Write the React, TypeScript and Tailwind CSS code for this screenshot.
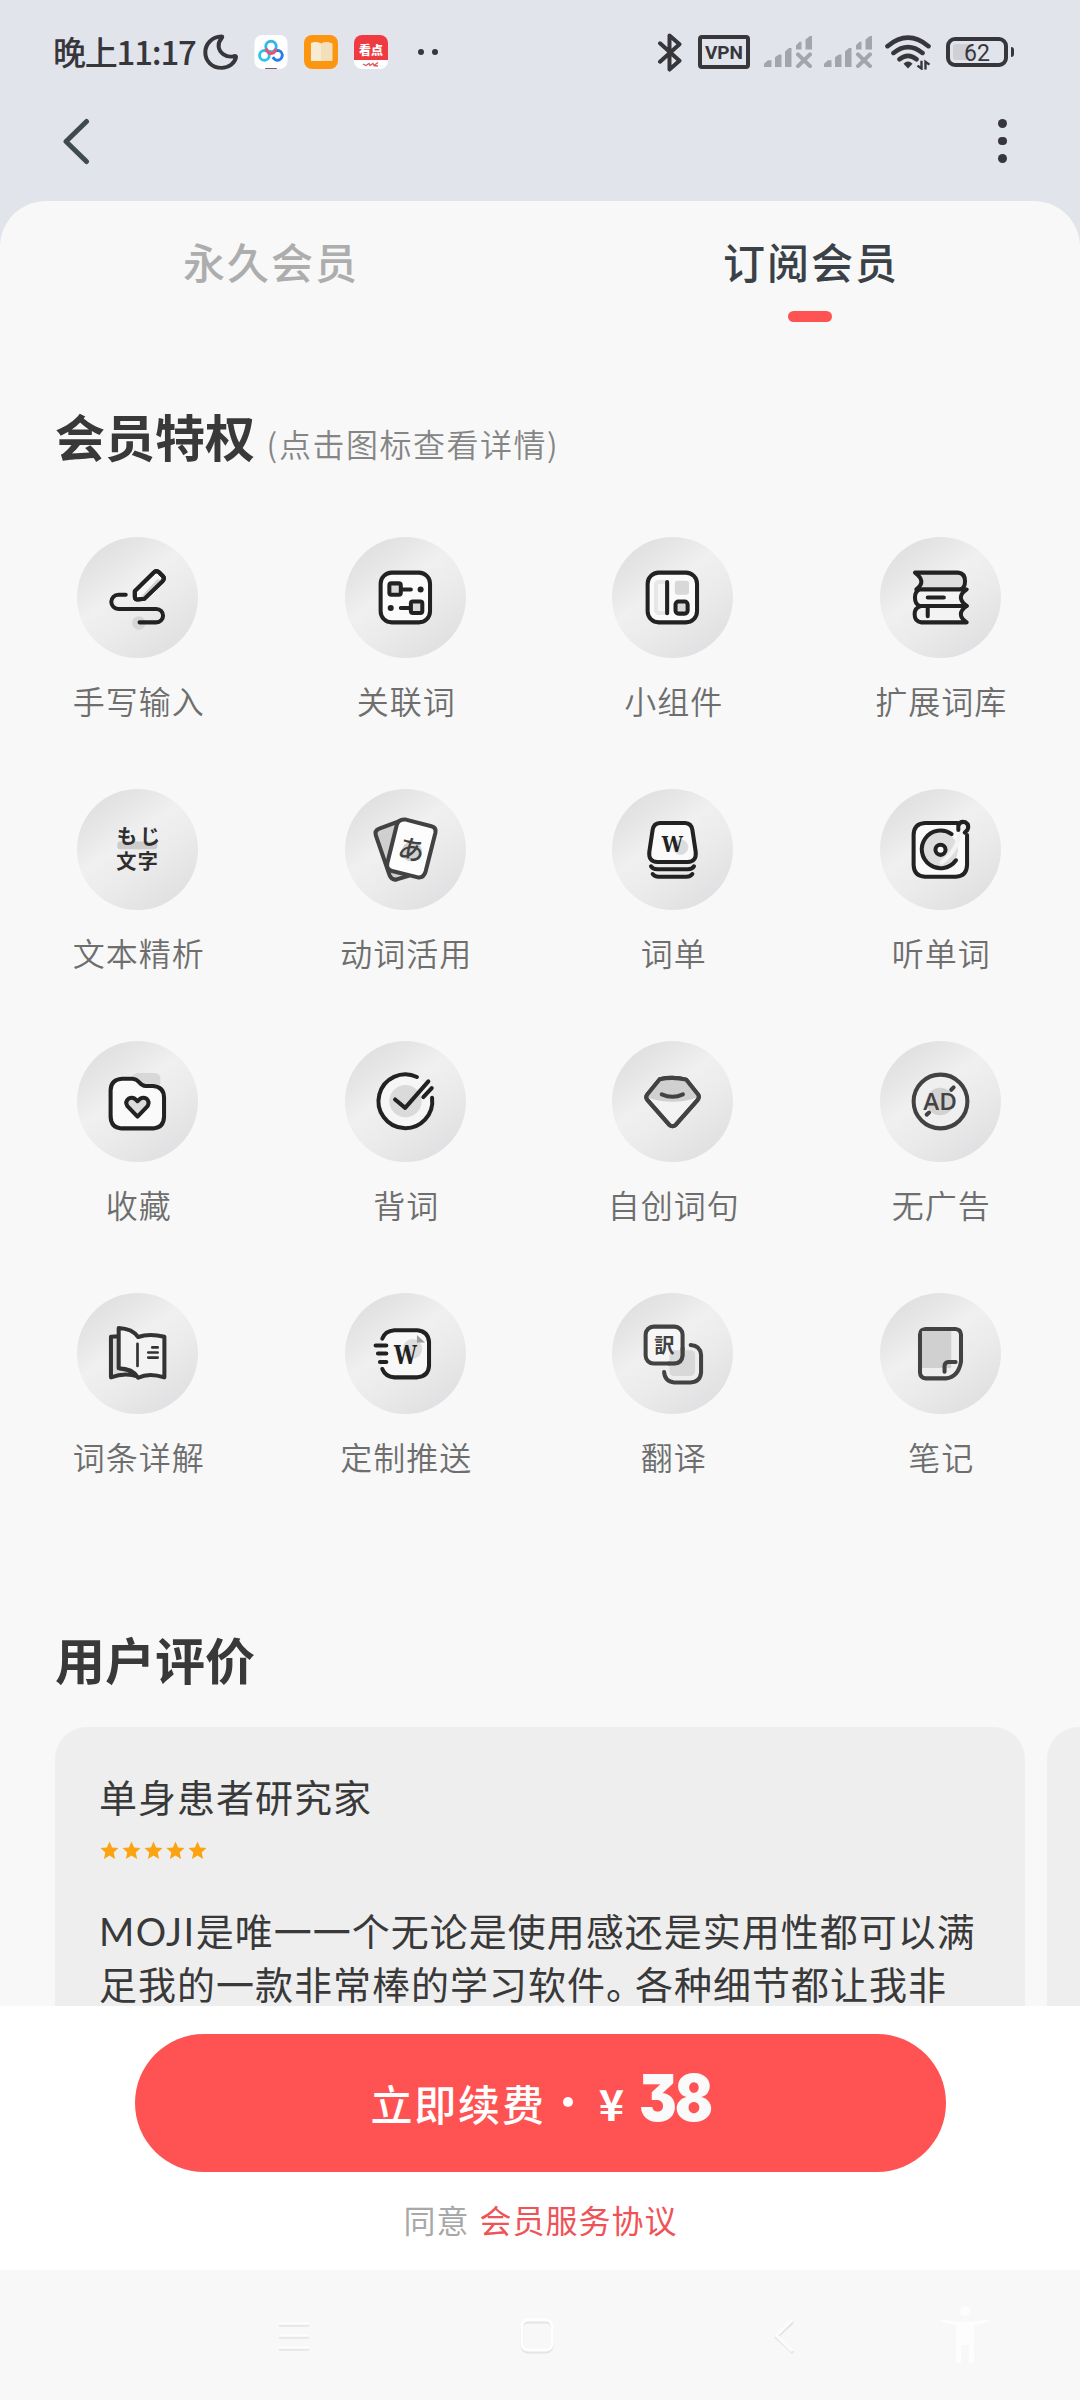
import type { ReactNode } from "react";

const INK = "#222222";
const SOFT_INK = "#424242";

/* Status bar icons */

function Moon() {
  return (
    <svg className="h-[36px] w-[36px]" viewBox="0 0 36 38" preserveAspectRatio="none" fill="none">
      <path
        d="M18.500 2.500C9 3 2.300 10.500 2.300 19.500C2.300 29 9.500 35.700 18.500 35.700C26 35.700 31.800 31 33 24.500C33.200 23.200 32.300 22.800 31.300 23.200C28 24.500 24 24 20.500 21.500C14.500 17 14.200 10 18.500 4.500C19.400 3.300 19.500 2.500 18.500 2.500Z"
        stroke="#37363b"
        strokeWidth="4"
        strokeLinejoin="round"
      />
    </svg>
  );
}

function CloudDiskIcon() {
  return (
    <svg className="h-[34px] w-[34px]" viewBox="0 0 34 35" fill="none">
      <rect width="34" height="35" rx="8" fill="#ffffff" />
      <circle cx="10.200" cy="21" r="5" stroke="#2fc3e6" strokeWidth="3" />
      <path d="M18.800 19.500a5 5 0 1 1 3.500 6.300c-1.500-.4-2.500-1.500-3.500-3" stroke="#2a7de8" strokeWidth="3" />
      <circle cx="17" cy="11.800" r="5.400" stroke="#39b5ec" strokeWidth="3" />
      <path d="M11.800 14c1.500 3.500 4 5 5.400 5s3.800-1.500 5-5" stroke="#f0506a" strokeWidth="3" />
      <rect x="11" y="34" width="12" height="1" fill="#7d5960" />
    </svg>
  );
}

function ReaderIcon() {
  return (
    <svg className="h-[34px] w-[34px]" viewBox="0 0 34 34" fill="none">
      <rect width="34" height="34" rx="8" fill="#fc9610" />
      <path d="M7 8Q12 6 17 8.500V26H7Z" fill="#f6ecd6" />
      <path d="M17 8.500Q22 6 27 8L28.500 8.500V26H17Z" fill="#f3dfba" />
    </svg>
  );
}

function NewsIcon() {
  return (
    <div className="flex h-[34px] w-[34px] flex-col overflow-hidden rounded-[8px] bg-white">
      <div className="flex h-[25px] items-center justify-center bg-[#ee3a40] pt-[5px] text-[12px] leading-none font-black text-white">
        看点
      </div>
      <svg className="h-[9px] w-[34px]" viewBox="0 0 34 9" fill="none">
        <path d="M9 4l3 1.500 3-2 1 2 3-2 1 2 4-3M20 5.500l4 .5" stroke="#e0575c" strokeWidth="1.300" />
      </svg>
    </div>
  );
}

function Bluetooth() {
  return (
    <svg className="h-[39px] w-[26px]" viewBox="0 0 26 40" preserveAspectRatio="none" fill="none">
      <path
        d="M3 10.500L22.500 28.500L12.500 37.500V2.500L22.500 11.500L3 29.500"
        stroke="#37363b"
        strokeWidth="4"
        strokeLinecap="round"
        strokeLinejoin="round"
      />
    </svg>
  );
}

function Signal() {
  return (
    <svg className="h-[32px] w-[48px]" viewBox="0 0 48 33" preserveAspectRatio="none" fill="#a2a5ac">
      <path d="M0 32V28.500L4 25h3.500v7ZM11 32V22l4-3h2.500v13ZM21 32V16l4-3.500h2.500V32ZM32 14V9.500L35.500 6H37.500v8ZM41.500 14V3.500L46 0h2V14Z" />
      <path d="M34 19L46 31M46 19L34 31" stroke="#a2a5ac" strokeWidth="4" strokeLinecap="round" />
    </svg>
  );
}

function Wifi() {
  return (
    <svg className="h-[35px] w-[46px]" viewBox="0 0 46 36" preserveAspectRatio="none" fill="none">
      <path
        d="M2.500 11.500Q23 -6 43.500 11.500M8.500 18.500Q23 6.500 37.500 18.500M14.500 25Q23 18 31.500 25"
        stroke="#37363b"
        strokeWidth="4.600"
        strokeLinecap="round"
      />
      <path d="M18.500 29.500Q23 25 27.500 29.500L23 34.500Z" fill="#37363b" />
      <path d="M36.500 26.500V34.500L32.500 31.500M40.500 35.500V27.500L44.500 30.500" stroke="#37363b" strokeWidth="2.400" />
    </svg>
  );
}

function Battery() {
  return (
    <div className="flex items-center gap-[3px]">
      <div className="relative flex h-[30px] w-[62px] items-center justify-center rounded-[9px] border-4 border-[#37363b]">
        <div className="absolute top-[3px] bottom-[3px] left-[3px] w-[20px] rounded-[3px] bg-[#cfd0d6]" />
        <span className="relative top-px font-['Roboto',sans-serif] text-[23px] leading-none">62</span>
      </div>
      <div className="h-[10px] w-[3px] rounded-r-full bg-[#37363b]" />
    </div>
  );
}

function StatusBar() {
  return (
    <div className="flex h-[104px] items-center pr-[66px] pl-[53px] text-[#37363b]">
      <span className="-mt-px w-[150px] text-[33px] leading-none font-medium tracking-[-1.200px] whitespace-nowrap">
        晚上11:17
      </span>
      <Moon />
      <div className="ml-[15px] flex gap-4">
        <CloudDiskIcon />
        <ReaderIcon />
        <NewsIcon />
      </div>
      <div className="ml-[30px] flex gap-2">
        <span className="h-[6px] w-[6px] rounded-full bg-[#37363b]" />
        <span className="h-[6px] w-[6px] rounded-full bg-[#37363b]" />
      </div>
      <div className="ml-auto flex items-center">
        <Bluetooth />
        <span className="ml-[15px] flex h-[34px] w-[52px] items-center justify-center rounded-[4px] border-4 border-[#37363b] font-['Roboto',sans-serif] text-[19px] leading-none font-bold">
          VPN
        </span>
        <span className="ml-[14px]">
          <Signal />
        </span>
        <span className="ml-[12px]">
          <Signal />
        </span>
        <span className="mr-[15px] ml-[13px]">
          <Wifi />
        </span>
        <Battery />
      </div>
    </div>
  );
}

function TitleBar() {
  return (
    <div className="flex h-[97px] justify-between pt-[14px] pr-[73px] pl-[61px]">
      <svg className="h-[50px] w-[32px]" viewBox="0 0 32 50" fill="none">
        <path d="M25.500 3.500L5 23.500L25.500 43.500" stroke="#404a51" strokeWidth="5" strokeLinecap="round" strokeLinejoin="round" />
      </svg>
      <div className="flex flex-col items-center gap-[9px] pt-px">
        <span className="h-[8.500px] w-[9px] rounded-full bg-[#37363b]" />
        <span className="h-[8.500px] w-[9px] rounded-full bg-[#37363b]" />
        <span className="h-[8.500px] w-[9px] rounded-full bg-[#37363b]" />
      </div>
    </div>
  );
}

/* Privilege icons, each drawn on a 360 unit disc */

type Privilege = { label: string; viewBox: string; ink?: string; art: ReactNode };

const JP = "'Noto Sans CJK JP', sans-serif";
const SLAB = "'DejaVu Serif', serif";

const privileges: Privilege[] = [
  {
    label: "手写输入",
    viewBox: "116 52 360 360",
    art: (
      <>
        <circle cx="300" cy="308" r="20" fill="#d6d6d6" stroke="none" />
        <path d="M344 158Q352 150 360 157L371 168Q378 175 371 183L316 236L297 238Q288 239 288 230V213Z" fill="#f8f8f8" />
        <path d="M355 178L306 230L318 234L370 180Z" fill="#d2d2d2" stroke="none" />
        <path d="M344 158Q352 150 360 157L371 168Q378 175 371 183L316 236L297 238Q288 239 288 230V213Z" />
        <path d="M261 224H239a21 21 0 0 0 0 42H352a20 20 0 0 1 0 40H302" />
      </>
    ),
  },
  {
    label: "关联词",
    viewBox: "917 52 360 360",
    art: (
      <>
        <rect x="1023" y="158" width="147" height="148" rx="33" fill="#fafafa" />
        <rect x="1049" y="190" width="34" height="34" rx="6" fill="#dadada" />
        <path d="M1085 208H1113M1083 263H1108" />
        <rect x="1113" y="244" width="34" height="34" rx="6" fill="#dadada" />
        <circle cx="1142" cy="208" r="9" fill={INK} stroke="none" />
        <circle cx="1053" cy="263" r="9" fill={INK} stroke="none" />
      </>
    ),
  },
  {
    label: "小组件",
    viewBox: "101 52 360 360",
    art: (
      <>
        <rect x="207" y="158" width="147" height="148" rx="33" fill="#fafafa" />
        <rect x="232" y="186" width="34" height="92" rx="8" fill="#f6f6f6" stroke="#e6e6e6" />
        <rect x="288" y="182" width="42" height="42" rx="8" fill="#d8d8d8" stroke="none" />
        <path d="M265 186V279" />
        <rect x="290" y="244" width="36" height="36" rx="9" fill="#dadada" />
      </>
    ),
  },
  {
    label: "扩展词库",
    viewBox: "902 52 360 360",
    art: (
      <>
        <path d="M1006 158H1134Q1155 160 1155 184Q1155 206 1140 208H1010Q1042 184 1006 158Z" fill="#dedede" />
        <path d="M1160 208H1020Q1006 214 1006 232Q1006 252 1020 257H1160Q1125 232 1160 208Z" fill="#f3f3f3" />
        <path d="M1160 257H1025Q1005 262 1005 282Q1005 304 1025 306H1160Q1125 282 1160 257Z" fill="#f3f3f3" />
        <path d="M1044 258V288M1044 232H1092" />
      </>
    ),
  },
  {
    label: "文本精析",
    viewBox: "116 808 360 360",
    art: (
      <>
        <rect x="236" y="964" width="119" height="23" rx="8" fill="#cccccc" stroke="none" />
        <g fill="#2f2f2f" stroke="none" fontFamily={JP} fontWeight="700" textAnchor="middle">
          <text x="265" y="972" fontSize="61">も</text>
          <text x="333" y="972" fontSize="61">じ</text>
          <text x="263" y="1047" fontSize="60">文</text>
          <text x="327" y="1047" fontSize="60">字</text>
        </g>
      </>
    ),
  },
  {
    label: "动词活用",
    viewBox: "917 808 360 360",
    ink: SOFT_INK,
    art: (
      <>
        <path d="M1077 904L1019 926Q1004 932 1009 947L1050 1066Q1057 1080 1071 1077L1106 1066Z" fill="#cfcfcf" />
        <path
          d="M1098 899L1174 919Q1189 923 1186 938L1157 1053Q1151 1073 1134 1071L1057 1052Q1038 1046 1043 1028L1071 915Q1077 896 1098 899Z"
          fill="#fdfdfd"
        />
        <circle cx="1116" cy="994" r="30" fill="#d0d0d0" stroke="none" />
        <text
          x="1114"
          y="1017"
          fontSize="78"
          fontWeight="500"
          fill={SOFT_INK}
          stroke="none"
          fontFamily={JP}
          textAnchor="middle"
          transform="rotate(13 1114 990)"
        >
          あ
        </text>
      </>
    ),
  },
  {
    label: "词单",
    viewBox: "101 808 360 360",
    art: (
      <>
        <path
          d="M243 909H319Q337 910 340 929L350 995Q353 1024 326 1025H236Q209 1024 212 995L222 929Q225 910 243 909Z"
          fill="#fafafa"
        />
        <circle cx="305" cy="981" r="23" fill="#dcdcdc" stroke="none" />
        <text
          x="249"
          y="995"
          fontSize="66"
          fontWeight="700"
          fill={INK}
          stroke="none"
          fontFamily={SLAB}
          textLength="63"
          lengthAdjust="spacingAndGlyphs"
        >
          W
        </text>
        <path d="M217 1038Q222 1047 236 1047H326Q340 1047 345 1038M222 1061Q227 1069 240 1069H322Q335 1069 340 1061" />
      </>
    ),
  },
  {
    label: "听单词",
    viewBox: "902 808 360 360",
    art: (
      <>
        <path d="M1133 909H1036Q1002 911 1002 945V1034Q1003 1067 1036 1069H1128Q1160 1067 1161 1034V945" fill="#fafafa" />
        <circle cx="1082" cy="989" r="52" fill="#dddddd" stroke="none" />
        <path d="M1143 925Q1135 990 1086 1026" stroke="#f4f4f4" strokeWidth="13" />
        <path d="M1115 942A56 56 0 1 0 1128 1020" />
        <circle cx="1082" cy="989" r="15" fill="#fafafa" />
        <path d="M1135 930V917Q1141 902 1156 907Q1169 915 1162 930L1154 938" />
      </>
    ),
  },
  {
    label: "收藏",
    viewBox: "116 64 360 360",
    art: (
      <>
        <rect x="280" y="159" width="84" height="44" rx="16" fill="#d8d8d8" stroke="none" />
        <path
          d="M250 176H281Q293 177 301 187Q310 198 320 198H342Q374 200 375 232V289Q374 322 342 324H249Q217 322 216 289V210Q217 178 250 176Z"
          fill="#fafafa"
        />
        <path d="M296 289L266 258Q258 244 269 236Q283 227 296 243Q309 227 323 236Q333 245 326 258Z" fill="#dcdcdc" />
      </>
    ),
  },
  {
    label: "背词",
    viewBox: "917 64 360 360",
    art: (
      <>
        <circle cx="1097" cy="244" r="80" fill="#f6f6f6" stroke="none" />
        <circle cx="1097" cy="243" r="48" fill="#dadada" stroke="none" />
        <path d="M1131 171A80 80 0 1 0 1176 233" />
        <path d="M1066 238L1096 263L1165 184M1150 231L1175 204" />
      </>
    ),
  },
  {
    label: "自创词句",
    viewBox: "101 64 360 360",
    ink: SOFT_INK,
    art: (
      <>
        <path d="M243 178Q281 169 322 179L357 223Q362 231 356 239L291 313Q281 322 271 313L206 239Q200 231 206 223Z" fill="#f3f3f3" />
        <path d="M243 178Q281 169 322 179L357 231Q281 258 205 231Z" fill="#d0d0d0" stroke="none" />
        <path d="M243 178Q281 169 322 179L357 223Q362 231 356 239L291 313Q281 322 271 313L206 239Q200 231 206 223Z" />
        <path d="M249 223Q281 237 312 223" />
      </>
    ),
  },
  {
    label: "无广告",
    viewBox: "902 64 360 360",
    ink: SOFT_INK,
    art: (
      <>
        <circle cx="1082" cy="244" r="80" fill="#efefef" />
        <circle cx="1081" cy="244" r="41" fill="#d2d2d2" stroke="none" />
        <path d="M1114 209L1121 202M1041 283L1048 277" />
        <text
          x="1031"
          y="268"
          fontSize="69"
          fontWeight="600"
          fill={SOFT_INK}
          stroke="none"
          fontFamily="'Open Sans', sans-serif"
          textLength="100"
          lengthAdjust="spacingAndGlyphs"
        >
          AD
        </text>
      </>
    ),
  },
  {
    label: "词条详解",
    viewBox: "116 820 360 360",
    ink: "#333333",
    art: (
      <>
        <path d="M241 949L217 950V1071Q260 1055 298 1069L270 1050L241 1043Z" fill="#dadada" />
        <path d="M240 924Q281 926 298 951Q330 940 376 950V1071Q330 1056 298 1072Q281 1044 240 1044Z" fill="#f3f3f3" />
        <path d="M296 971V1037" strokeWidth="8" />
        <path d="M340 982H356M328 997H356M328 1012H356" strokeWidth="8" />
      </>
    ),
  },
  {
    label: "定制推送",
    viewBox: "917 820 360 360",
    art: (
      <>
        <rect x="1027" y="931" width="140" height="140" rx="36" fill="#f8f8f8" stroke="none" />
        <path d="M1028 956Q1036 933 1064 931H1132Q1165 934 1167 966V1037Q1165 1068 1132 1071H1064Q1037 1069 1028 1046" />
        <circle cx="1118" cy="986" r="29" fill="#dcdcdc" stroke="none" />
        <path d="M1131 945L1155 967H1131Z" fill="#9c9c9c" stroke="none" />
        <path d="M1008 976H1040M1015 1000H1040M1021 1025H1040" />
        <text
          x="1063"
          y="1031"
          fontSize="79"
          fontWeight="700"
          fill={INK}
          stroke="none"
          fontFamily={SLAB}
          textLength="68"
          lengthAdjust="spacingAndGlyphs"
        >
          W
        </text>
      </>
    ),
  },
  {
    label: "翻译",
    viewBox: "101 820 360 360",
    ink: SOFT_INK,
    art: (
      <>
        <path d="M316 975H335Q364 977 366 1004V1056Q364 1084 335 1086H286Q258 1084 256 1056V1030H316Z" fill="#eeeeee" stroke="none" />
        <rect x="201" y="920" width="110" height="110" rx="24" fill="#f6f6f6" />
        <rect x="272" y="990" width="76" height="77" rx="14" fill="#cfcfcf" fillOpacity="0.700" stroke="none" />
        <path d="M311 985V1006Q309 1028 287 1030H270" />
        <path d="M335 975Q364 977 366 1004V1056Q364 1084 335 1086H286Q258 1084 256 1055" />
        <text x="257" y="999" fontSize="60" fontWeight="700" fill={SOFT_INK} stroke="none" fontFamily={JP} textAnchor="middle">
          訳
        </text>
      </>
    ),
  },
  {
    label: "笔记",
    viewBox: "902 820 360 360",
    ink: SOFT_INK,
    art: (
      <>
        <path d="M1038 927H1126Q1142 928 1143 944V1024Q1135 1070 1098 1074H1038Q1022 1073 1021 1057V944Q1022 928 1038 927Z" fill="#eeeeee" />
        <path d="M1027 933H1114V1043H1027Z" fill="#d0d0d0" stroke="none" />
        <path d="M1094 1054V1036Q1095 1026 1105 1025H1127" />
      </>
    ),
  },
];

function PrivilegeItem({ label, viewBox, ink = INK, art }: Privilege) {
  return (
    <div className="flex h-[252px] flex-col items-center">
      <div className="h-[121px] w-[121px] rounded-full bg-[linear-gradient(145deg,#dedede_8%,#e6e6e6_25%,#f0f0f0_42%,#ebebeb_60%,#e0e0e2_88%)]">
        <svg
          className="h-full w-full"
          viewBox={viewBox}
          fill="none"
          stroke={ink}
          strokeWidth="12"
          strokeLinecap="round"
          strokeLinejoin="round"
        >
          {art}
        </svg>
      </div>
      <span className="mt-[24px] pl-[2px] text-[32px] leading-[36px] font-[350] tracking-[1px] text-[#6e6e6e]">{label}</span>
    </div>
  );
}

function Tabs() {
  return (
    <div className="grid grid-cols-2 text-center text-[42px] leading-[48px] font-medium tracking-[2px]">
      <div className="pt-[36px] pl-[2px] text-[#adadad]">永久会员</div>
      <div className="flex flex-col items-center pt-[36px] text-[#3a4147]">
        <span className="pl-[2px]">订阅会员</span>
        <span className="mt-[26px] h-[11px] w-[44px] rounded-full bg-[#ff5252]" />
      </div>
    </div>
  );
}

function Star() {
  return (
    <svg className="h-[19px] w-[19px]" viewBox="0 0 19 19" fill="#fca311">
      <path d="M9.500 .5l2.600 6 6.400.6-4.800 4.300 1.400 6.600-5.600-3.500L3.900 18l1.400-6.600L.5 7.100l6.400-.6Z" />
    </svg>
  );
}

function Reviews() {
  return (
    <div className="flex gap-[22px] pl-[55px]">
      <article className="h-[340px] w-[970px] shrink-0 rounded-[32px] bg-[#eeeeee] pt-[47px] pl-[44px] text-[38px] text-[#393939]">
        <h3 className="leading-[44px] tracking-[1px]">单身患者研究家</h3>
        <div className="mt-[23px] ml-px flex gap-[3px]">
          {[1, 2, 3, 4, 5].map((n) => (
            <Star key={n} />
          ))}
        </div>
        <p className="mt-[44px] leading-[52px] tracking-[1px] whitespace-nowrap">
          <span className="font-['Lato',sans-serif] tracking-[1.400px]">MOJI</span>
          是唯一一个无论是使用感还是实用性都可以满
          <br />
          足我的一款非常棒的学习软件<span className="tracking-[-9px]">。</span>各种细节都让我非
        </p>
      </article>
      <div className="h-[340px] w-[970px] shrink-0 rounded-[32px] bg-[#eeeeee]" />
    </div>
  );
}

function Footer() {
  return (
    <footer className="flex h-[264px] shrink-0 flex-col items-center bg-white pt-[28px]">
      <button className="flex h-[138px] w-[811px] items-center rounded-full bg-[#ff5252] pl-[236px] text-white">
        <span className="text-[42px] leading-none font-medium tracking-[1.800px]">立即续费</span>
        <span className="-mt-[2px] ml-[17px] h-[10px] w-[10px] rounded-full bg-white" />
        <span className="-mt-[2px] ml-[26px] text-[43px] leading-none font-bold">¥</span>
        <span className="-mt-[12px] ml-[15px] origin-left scale-x-[.87] font-['Inter',sans-serif] text-[65px] leading-none font-black tracking-[-2.500px] text-[#fafafa] [font-feature-settings:'cv09']">
          38
        </span>
      </button>
      <p className="mt-[29px] pl-px text-[32px] leading-[36px] tracking-[1px]">
        <span className="text-[#a8a8a8]">同意</span>
        <span className="ml-[10px] text-[#f05357]">会员服务协议</span>
      </p>
    </footer>
  );
}

function NavBar() {
  return (
    <nav className="flex h-[130px] shrink-0 items-center bg-[#f8f8f8]">
      <svg className="ml-[277px] h-[40px] w-[34px] shrink-0" viewBox="0 0 34 40" strokeWidth="2.500">
        <path d="M2 10.500H32M2 22.500H32M2 34.500H32" stroke="#e6e6e6" />
        <path d="M2 8.500H32M2 20.500H32M2 32.500H32" stroke="#fdfdfd" />
      </svg>
      <svg className="ml-[208px] h-[40px] w-[36px] shrink-0" viewBox="0 0 36 40" fill="none" strokeWidth="3">
        <rect x="3" y="7" width="30" height="30" rx="6" stroke="#e4e4e4" />
        <rect x="3" y="5" width="30" height="30" rx="6" stroke="#fefefe" />
      </svg>
      <svg className="ml-[217px] h-[40px] w-[26px] shrink-0" viewBox="0 0 26 40" fill="none" strokeWidth="3">
        <path d="M21 7L4.500 22.500L21 38" stroke="#e4e4e4" />
        <path d="M20 5L4.500 20.500L20 36" stroke="#fcfcfc" />
      </svg>
      <svg className="ml-[142px] h-[64px] w-[50px] shrink-0" viewBox="0 0 50 64" fill="#fdfdfd">
        <circle cx="25" cy="8" r="5" />
        <path d="M1 16Q25 22 49 16V19L34 22V60H29V42H21V60H16V22L1 19Z" />
      </svg>
    </nav>
  );
}

export default function App() {
  return (
    <div className="flex h-[2400px] w-[1080px] flex-col overflow-hidden bg-[#e2e4eb] font-['Noto_Sans_CJK_SC',sans-serif]">
      <header className="shrink-0">
        <StatusBar />
        <TitleBar />
      </header>
      <main className="min-h-0 flex-1 overflow-hidden rounded-t-[46px] bg-[#f8f8f8]">
        <Tabs />
        <section className="pt-[81px]">
          <div className="flex h-[64px] items-end pl-[55px]">
            <h2 className="text-[50px] leading-[64px] font-bold text-[#393939]">会员特权</h2>
            <span className="mb-[6px] ml-[-8px] text-[32px] leading-[36px] font-[350] tracking-[1.500px] text-[#858585]">
              <span className="inline-block w-[32px] pr-[2px] text-right tracking-normal">(</span>点击图标查看详情
              <span className="tracking-normal">)</span>
            </span>
          </div>
          <div className="mt-[70px] grid grid-cols-4 pr-[6px] pl-[4px]">
            {privileges.map((item) => (
              <PrivilegeItem key={item.label} {...item} />
            ))}
          </div>
        </section>
        <section>
          <h2 className="mt-[81px] pl-[55px] text-[50px] leading-[64px] font-bold text-[#393939]">用户评价</h2>
          <div className="mt-[37px]">
            <Reviews />
          </div>
        </section>
      </main>
      <Footer />
      <NavBar />
    </div>
  );
}
